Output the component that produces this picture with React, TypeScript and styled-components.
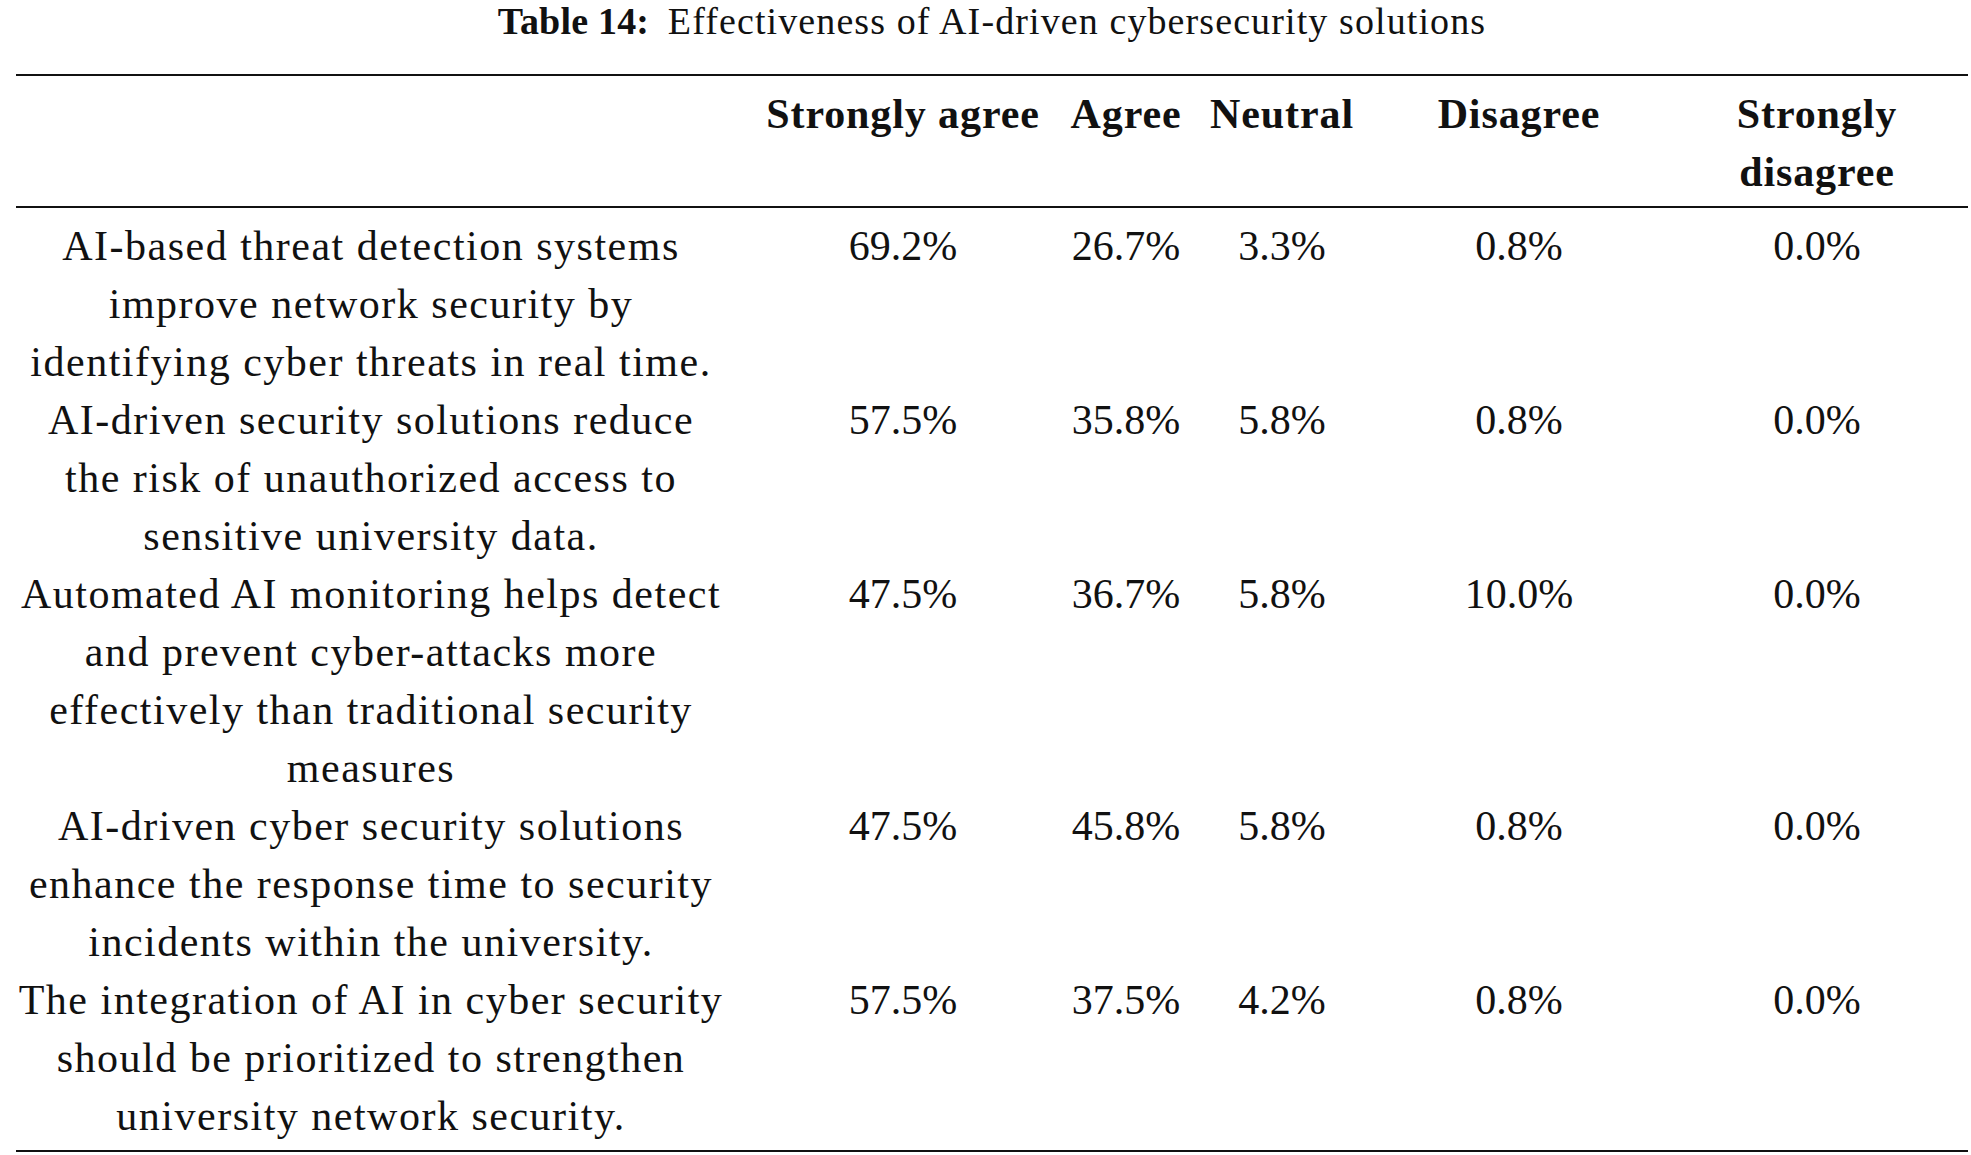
import React from "react";
import styled, { createGlobalStyle, css } from "styled-components";

interface SurveyRow {
  statement: string[];
  values: string[];
}

const headers = ["Strongly agree", "Agree", "Neutral", "Disagree"];

const rows: SurveyRow[] = [
  {
    statement: [
      "AI-based threat detection systems",
      "improve network security by",
      "identifying cyber threats in real time.",
    ],
    values: ["69.2%", "26.7%", "3.3%", "0.8%", "0.0%"],
  },
  {
    statement: [
      "AI-driven security solutions reduce",
      "the risk of unauthorized access to",
      "sensitive university data.",
    ],
    values: ["57.5%", "35.8%", "5.8%", "0.8%", "0.0%"],
  },
  {
    statement: [
      "Automated AI monitoring helps detect",
      "and prevent cyber-attacks more",
      "effectively than traditional security",
      "measures",
    ],
    values: ["47.5%", "36.7%", "5.8%", "10.0%", "0.0%"],
  },
  {
    statement: [
      "AI-driven cyber security solutions",
      "enhance the response time to security",
      "incidents within the university.",
    ],
    values: ["47.5%", "45.8%", "5.8%", "0.8%", "0.0%"],
  },
  {
    statement: [
      "The integration of AI in cyber security",
      "should be prioritized to strengthen",
      "university network security.",
    ],
    values: ["57.5%", "37.5%", "4.2%", "0.8%", "0.0%"],
  },
];

const GlobalStyle = createGlobalStyle`
  body {
    margin: 0;
    background: #fff;
    color: #111;
    font-family: "Liberation Serif", "Times New Roman", serif;
  }
`;

const Page = styled.div`
  width: 1952px;
  padding: 0 3px 0 16px;
`;

const Caption = styled.div`
  height: 42px;
  margin-bottom: 32px;
  text-align: center;
  font-size: 38px;
  line-height: 42px;
  letter-spacing: 1.1px;
  white-space: nowrap;
`;

const CaptionLabel = styled.span`
  font-weight: 700;
  letter-spacing: 0.2px;
  margin-right: 8px;
`;

const Table = styled.div`
  border-top: 2px solid #111;
  border-bottom: 2px solid #111;
`;

const Grid = styled.div<{ $head?: boolean }>`
  display: grid;
  grid-template-columns: 710px 354px 92px 220px 254px 322px;
  justify-items: center;
  align-items: start;
  padding: 9px 0 5px;
  font-size: 42px;
  line-height: 58px;
  ${(p) =>
    p.$head &&
    css`
      border-bottom: 2px solid #111;
      font-weight: 700;
      letter-spacing: 0.9px;
    `}
`;

const Cell = styled.div<{ $last?: boolean; $num?: boolean; $text?: boolean }>`
  white-space: nowrap;
  text-align: center;
  ${(p) => p.$num && css`letter-spacing: 0;`}
  ${(p) => p.$text && css`letter-spacing: 1.5px;`}
  ${(p) =>
    p.$last &&
    css`
      justify-self: stretch;
      padding-left: 20px;
    `}
`;

const App = () => {
  return (
    <Page>
      <GlobalStyle />
      <Caption>
        <CaptionLabel>Table 14:</CaptionLabel> Effectiveness of AI-driven cybersecurity solutions
      </Caption>
      <Table>
        <Grid $head>
          <Cell />
          {headers.map((h) => (
            <Cell key={h}>{h}</Cell>
          ))}
          <Cell $last>
            Strongly
            <br />
            disagree
          </Cell>
        </Grid>
        <Grid>
          {rows.map((row, i) => (
            <React.Fragment key={i}>
              <Cell $text>
                {row.statement.map((line, j) => (
                  <React.Fragment key={j}>
                    {j > 0 && <br />}
                    {line}
                  </React.Fragment>
                ))}
              </Cell>
              {row.values.map((v, k) => (
                <Cell key={k} $num $last={k === row.values.length - 1}>
                  {v}
                </Cell>
              ))}
            </React.Fragment>
          ))}
        </Grid>
      </Table>
    </Page>
  );
};

export default App;
